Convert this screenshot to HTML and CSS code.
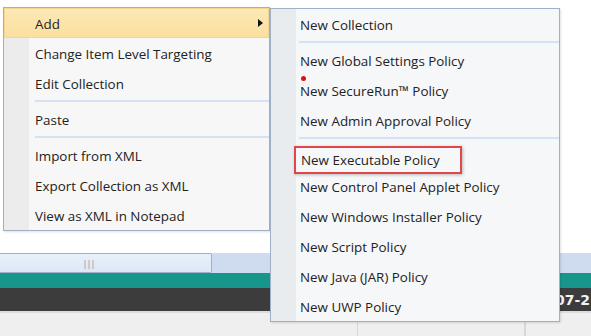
FILE: index.html
```html
<!DOCTYPE html>
<html>
<head>
	<title>Collection context menu</title>
	<link rel="stylesheet" href="styles.css">
</head>
<body>
	<div class="app">
		<div class="blank"></div>
		<div class="hscroll">
			<div class="thumb"><span class="grip">|||</span></div>
		</div>
		<div class="teal-bar"></div>
		<div class="dark-bar"><span class="date">007-2</span></div>
		<div class="grid-row">
			<div class="cell cell-a"></div>
			<div class="cell cell-b"></div>
			<div class="cell"></div>
		</div>
	</div>

	<ul class="menu main-menu">
		<li class="item active">Add<span class="arrow"></span></li>
		<li class="item">Change Item Level Targeting</li>
		<li class="item">Edit Collection</li>
		<li class="sep"></li>
		<li class="item">Paste</li>
		<li class="sep"></li>
		<li class="item">Import from XML</li>
		<li class="item">Export Collection as XML</li>
		<li class="item">View as XML in Notepad</li>
	</ul>

	<ul class="menu sub-menu">
		<li class="item">New Collection</li>
		<li class="sep"></li>
		<li class="item">New Global Settings Policy</li>
		<li class="item">New SecureRun™ Policy<span class="dot"></span></li>
		<li class="item">New Admin Approval Policy</li>
		<li class="sep"></li>
		<li class="item"><span class="marked">New Executable Policy</span></li>
		<li class="item">New Control Panel Applet Policy</li>
		<li class="item">New Windows Installer Policy</li>
		<li class="item">New Script Policy</li>
		<li class="item">New Java (JAR) Policy</li>
		<li class="item">New UWP Policy</li>
	</ul>
</body>
</html>
```

FILE: styles.css
```css
html, body {
	margin: 0;
	padding: 0;
}

body {
	background-color: #fff;
	font-family: "Open Sans", "Noto Sans", sans-serif;
	font-size: 13.4px;
	color: #222;
	width: 591px;
	height: 336px;
	overflow: hidden;
	position: relative;
}

/* page behind the menus */
.app {
	display: flex;
	flex-direction: column;
	height: 336px;
}

.blank {
	height: 253px;
}

.hscroll {
	height: 20px;
	background-color: #cfdcef;
	display: flex;
}

.thumb {
	width: 211px;
	height: 18px;
	background: linear-gradient(#e8f0fa, #dde7f5);
	border: 1px solid #9db1cf;
	border-left: none;
	border-radius: 0 2px 2px 0;
	display: flex;
	align-items: center;
	justify-content: center;
}

.grip {
	color: #7d8ea8;
	font-size: 9px;
	letter-spacing: -1px;
	margin-left: -34px;
}

.teal-bar {
	height: 15px;
	background-color: #17978c;
}

.dark-bar {
	height: 23px;
	background-color: #3c3c3c;
	display: flex;
	align-items: center;
	justify-content: flex-end;
	overflow: hidden;
}

.date {
	color: #f2f2f2;
	font-family: "DejaVu Sans", sans-serif;
	font-weight: bold;
	font-size: 14px;
	margin-right: 1px;
}

.grid-row {
	flex: 1;
	display: flex;
	background-color: #efefef;
	border-top: 2px solid #dcdcdc;
}

.cell {
	border-right: 1px solid #d8d8d8;
}

.cell-a {
	width: 357px;
}

.cell-b {
	width: 166px;
}

/* menus */
.menu {
	list-style: none;
	margin: 0;
	padding: 0;
	position: absolute;
	border: 1px solid #9fb0c9;
	background: linear-gradient(to right, #e9ecef 25px, #f6f7f9 25px);
	box-shadow: 1px 1px 2px rgba(0, 0, 0, 0.12);
}

.main-menu {
	left: 3px;
	top: 7px;
	width: 265px;
	background: linear-gradient(to right, #ececec 25px, #f7f7f7 25px);
}

.sub-menu {
	left: 270px;
	top: 8px;
	width: 288px;
}

.item {
	height: 30px;
	line-height: 32px;
	position: relative;
	white-space: nowrap;
}

.main-menu .item {
	padding-left: 31px;
}

.sub-menu .item {
	padding-left: 29px;
}

.item.active {
	background: linear-gradient(#fde9b6, #fbdf9e);
	box-shadow: inset 0 0 0 1px #f4d48e;
}

.arrow {
	position: absolute;
	right: 6px;
	top: 11px;
	border-left: 5px solid #111;
	border-top: 4px solid transparent;
	border-bottom: 4px solid transparent;
}

.sep {
	height: 6px;
	display: flex;
	align-items: center;
	padding-left: 31px;
}

.sep::after {
	content: "";
	flex: 1;
	border-top: 2px solid #d6e1f1;
}

.sub-menu .sep {
	padding-left: 28px;
}

.dot {
	position: absolute;
	left: 30px;
	top: 1px;
	width: 5px;
	height: 5px;
	border-radius: 50%;
	background-color: #e01010;
}

.marked {
	display: inline-block;
	line-height: 24px;
	margin-left: -6px;
	padding: 0 20px 0 5px;
	border: 2px solid #e0474a;
	box-shadow: 1px 1px 3px rgba(0, 0, 0, 0.25);
	vertical-align: middle;
	position: relative;
	top: 2px;
}
```
